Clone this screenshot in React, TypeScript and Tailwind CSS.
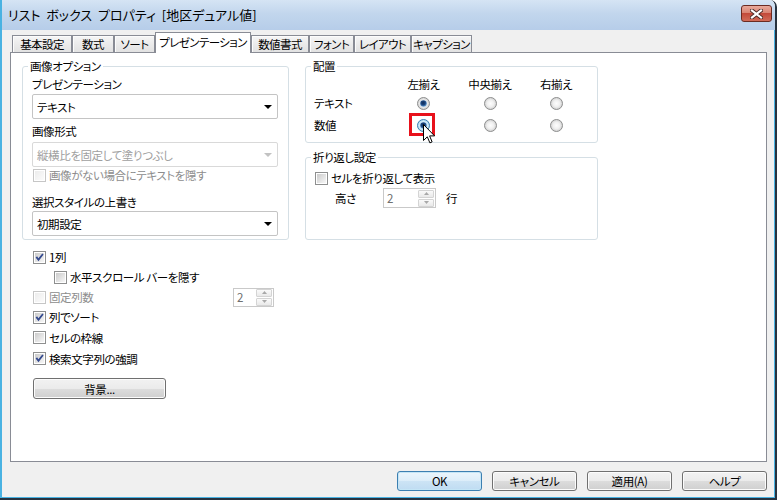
import React from "react";

function CheckBox({ checked = false, disabled = false }: { checked?: boolean; disabled?: boolean }) {
  return (
    <svg width="13" height="13" viewBox="0 0 13 13" className="shrink-0">
      <defs>
        <linearGradient id="cbg" x1="0" y1="0" x2="1" y2="1">
          <stop offset="0" stopColor="#cbcbcb" />
          <stop offset="1" stopColor="#f7f7f7" />
        </linearGradient>
        <linearGradient id="cbgd" x1="0" y1="0" x2="1" y2="1">
          <stop offset="0" stopColor="#ececec" />
          <stop offset="1" stopColor="#fbfbfb" />
        </linearGradient>
      </defs>
      <rect x="0.5" y="0.5" width="12" height="12" fill="#fff" stroke={disabled ? "#c6c6c6" : "#8e8f8f"} />
      <rect x="2" y="2" width="9" height="9" fill={disabled ? "url(#cbgd)" : "url(#cbg)"} />
      {checked && (
        <path d="M2.6 6.4 L4.1 5.2 L5.4 7.2 L9.3 2.4 L10.6 3.4 L5.5 10.2 Z" fill="#33498e" />
      )}
    </svg>
  );
}

function Radio({ checked = false, hover = false }: { checked?: boolean; hover?: boolean }) {
  return (
    <svg width="13" height="13" viewBox="0 0 13 13" className="shrink-0">
      <defs>
        <radialGradient id="rbg" cx="0.5" cy="0.5" r="0.5">
          <stop offset="0" stopColor="#fdfdfd" />
          <stop offset="0.55" stopColor="#f0f0f0" />
          <stop offset="1" stopColor="#cfcfcf" />
        </radialGradient>
        <radialGradient id="rbgh" cx="0.5" cy="0.5" r="0.5">
          <stop offset="0" stopColor="#f2f9fe" />
          <stop offset="0.6" stopColor="#d9effb" />
          <stop offset="1" stopColor="#a9d6f2" />
        </radialGradient>
        <radialGradient id="rdot" cx="0.45" cy="0.4" r="0.6">
          <stop offset="0" stopColor="#102c5a" />
          <stop offset="0.55" stopColor="#1b4680" />
          <stop offset="1" stopColor="#6fa8dc" />
        </radialGradient>
      </defs>
      <circle cx="6.5" cy="6.5" r="6" fill={hover ? "url(#rbgh)" : "url(#rbg)"} stroke={hover ? "#3c7fb1" : "#8e8f8f"} />
      {checked && <circle cx="6.5" cy="6.5" r="3.3" fill="url(#rdot)" />}
    </svg>
  );
}

function Arrow({ color }: { color: string }) {
  return (
    <svg width="8" height="4" viewBox="0 0 8 4" className="shrink-0">
      <polygon points="0,0 8,0 4,4" fill={color} />
    </svg>
  );
}

function Combo({ text, disabled = false, className = "" }: { text: string; disabled?: boolean; className?: string }) {
  return (
    <div
      className={`${className} h-[25px] flex items-center rounded-[2px] border ${
        disabled ? "border-[#d9d9d9] text-[#a0a0a0] bg-white" : "border-[#c4c4c4] bg-white"
      } pl-[4px] pr-[5px]`}
    >
      <span className="flex-1 whitespace-nowrap">{text}</span>
      <Arrow color={disabled ? "#c2c2c2" : "#000"} />
    </div>
  );
}

function CheckRow({
  label,
  checked = false,
  disabled = false,
  className = "",
}: {
  label: string;
  checked?: boolean;
  disabled?: boolean;
  className?: string;
}) {
  return (
    <div className={`${className} flex items-center gap-[3px] ${disabled ? "text-[#8d8d8d]" : ""}`}>
      <CheckBox checked={checked} disabled={disabled} />
      <span className="leading-[16px] whitespace-nowrap">{label}</span>
    </div>
  );
}

function SpinBtn({ up = false }: { up?: boolean }) {
  return (
    <div className="h-[8px] border border-[#d4d4d4] rounded-[1px] bg-[linear-gradient(#fafafa,#e9e9e9)] flex items-center justify-center">
      <svg width="5" height="3" viewBox="0 0 5 3">
        <polygon points={up ? "0,3 5,3 2.5,0" : "0,0 5,0 2.5,3"} fill="#a8a8a8" />
      </svg>
    </div>
  );
}

function Spinner({ className }: { className: string }) {
  return (
    <div className={`${className} border border-[#c9c9c9] bg-white flex items-stretch`}>
      <span className="flex-1 pl-[3px] text-[#707070] flex items-center leading-[16px]">2</span>
      <div className="w-[17px] flex flex-col justify-center gap-[1px] pr-[1px]">
        <SpinBtn up />
        <SpinBtn />
      </div>
    </div>
  );
}

function Button({ children, className = "", primary = false }: { children: React.ReactNode; className?: string; primary?: boolean }) {
  return (
    <div
      className={`${className} flex items-center justify-center rounded-[3px] border whitespace-nowrap ${
        primary
          ? "border-[#3c7fb1] bg-[linear-gradient(#eaf5fc,#dcedf9_50%,#cde4f5_50%,#bfdcf2)] shadow-[inset_0_0_0_1px_#c4e5f6]"
          : "border-[#707070] bg-[linear-gradient(#f2f2f2,#ebebeb_50%,#dddddd_50%,#cfcfcf)] shadow-[inset_0_0_0_1px_#fcfcfc]"
      } leading-[16px]`}
    >
      {children}
    </div>
  );
}

function CloseButton() {
  return (
    <div className="w-[31px] h-[17px] mt-[5px] mr-[3px] self-start rounded-[3px] border border-[#6b2b22] bg-[linear-gradient(#e9a99b,#d98473_45%,#c34a3a_50%,#d16b58)] flex items-center justify-center">
      <svg width="13" height="10" viewBox="0 0 13 10">
        <path d="M2 1.5 L11 8.5 M11 1.5 L2 8.5" stroke="#4a2a26" strokeWidth="4" strokeLinecap="square" />
        <path d="M2 1.5 L11 8.5 M11 1.5 L2 8.5" stroke="#ffffff" strokeWidth="2.2" strokeLinecap="square" />
      </svg>
    </div>
  );
}

const tabs: { label: string; w: string; active?: boolean }[] = [
  { label: "基本設定", w: "w-[60px]" },
  { label: "数式", w: "w-[42px]" },
  { label: "ソート", w: "w-[41px]" },
  { label: "プレゼンテーション", w: "w-[96px]", active: true },
  { label: "数値書式", w: "w-[58px]" },
  { label: "フォント", w: "w-[45px]" },
  { label: "レイアウト", w: "w-[57px]" },
  { label: "キャプション", w: "w-[61px]" },
];

export default function App() {
  return (
    <div className="w-[777px] h-[500px] flex flex-col overflow-hidden rounded-tr-[7px] border-r-2 border-b-2 border-[#27323f] text-[11.5px] tracking-[-0.4px] leading-[16px] text-black [font-family:'Noto_Sans_CJK_JP','Noto_Sans',sans-serif] [font-feature-settings:'palt'_1] select-none">
      {/* Title bar */}
      <div className="h-[30px] shrink-0 flex items-center bg-[linear-gradient(#d5e4f4,#c2d6ed_45%,#b6cde9)] border-l-2 border-[#49b2e2]">
        <span className="pl-[6px] text-[13px] tracking-normal [word-spacing:3px] whitespace-nowrap">
          リスト ボックス プロパティ [地区デュアル値]
        </span>
        <div className="flex-1" />
        <CloseButton />
      </div>

      {/* Body */}
      <div className="flex-1 flex flex-col bg-[#f0f0f0] border-l-2 border-r border-b border-[#49b2e2] pl-[8px] pr-[7px] pt-[2px]">
        {/* Tabs */}
        <div className="relative z-10 h-[20px] flex items-end pl-[2px]">
          {tabs.map((t) =>
            t.active ? (
              <div
                key={t.label}
                className={`${t.w} h-[21px] mb-[-1px] bg-white border border-b-0 border-[#898c95] flex justify-center pt-[1px] whitespace-nowrap tracking-[-0.6px]`}
              >
                {t.label}
              </div>
            ) : (
              <div
                key={t.label}
                className={`${t.w} h-[17px] border border-b-0 border-[#898c95] bg-[linear-gradient(#f6f6f6,#ebebeb_50%,#e2e2e2)] shadow-[inset_1px_1px_0_#fcfcfc] flex items-center justify-center whitespace-nowrap tracking-[-0.6px]`}
              >
                {t.label}
              </div>
            )
          )}
        </div>

        {/* Panel */}
        <div className="h-[410px] bg-white border border-[#898c95] flex flex-col pt-[6px] pl-[11px]">
          <div className="flex gap-[16px]">
            {/* Left group */}
            <fieldset className="w-[267px] h-[181px] border border-[#d5dfe5] rounded-[3px]">
              <legend className="ml-[5px] px-[2px] leading-[14px]">画像オプション</legend>
              <div className="pl-[9px] pr-[10px] flex flex-col">
                <div className="mt-[3px]">プレゼンテーション</div>
                <Combo className="mt-[2px]" text="テキスト" />
                <div className="mt-[4px]">画像形式</div>
                <Combo className="mt-[3px]" text="縦横比を固定して塗りつぶし" disabled />
                <CheckRow className="h-[16px] pl-[1px]" disabled label="画像がない場合にテキストを隠す" />
                <div className="mt-[11px]">選択スタイルの上書き</div>
                <Combo className="mt-[1px]" text="初期設定" />
              </div>
            </fieldset>

            {/* Right column */}
            <div className="w-[293px] flex flex-col">
              <fieldset className="h-[84px] border border-[#d5dfe5] rounded-[3px]">
                <legend className="ml-[5px] px-[2px] leading-[14px]">配置</legend>
                <div className="grid grid-cols-[84px_67px_66px_66px] mt-[3px]">
                  <div className="h-[16px]" />
                  <div className="text-center">左揃え</div>
                  <div className="text-center">中央揃え</div>
                  <div className="text-center">右揃え</div>

                  <div className="h-[22px] flex items-center pl-[8px]">テキスト</div>
                  <div className="flex items-center justify-center">
                    <Radio checked />
                  </div>
                  <div className="flex items-center justify-center">
                    <Radio />
                  </div>
                  <div className="flex items-center justify-center">
                    <Radio />
                  </div>

                  <div className="h-[22px] flex items-center pl-[8px]">数値</div>
                  <div className="flex items-center justify-center">
                    <div className="relative w-[13px] h-[13px]">
                      <Radio checked hover />
                      <div className="absolute left-[-8px] top-[-6px] w-[26px] h-[23px] border-[3px] border-[#e8111b]" />
                      <svg width="12" height="20" viewBox="0 0 12 20" className="absolute left-[6px] top-[5px]">
                        <path
                          d="M0.5 0.5 V16.5 L4.3 12.8 L6.9 18.9 L9.1 17.9 L6.6 11.9 H11.6 Z"
                          fill="#ffffff"
                          stroke="#000000"
                          strokeWidth="1"
                        />
                      </svg>
                    </div>
                  </div>
                  <div className="flex items-center justify-center">
                    <Radio />
                  </div>
                  <div className="flex items-center justify-center">
                    <Radio />
                  </div>
                </div>
              </fieldset>

              <fieldset className="mt-[7px] h-[90px] border border-[#d5dfe5] rounded-[3px]">
                <legend className="ml-[5px] px-[2px] leading-[14px]">折り返し設定</legend>
                <div className="flex flex-col">
                  <CheckRow className="mt-[6px] h-[16px] pl-[9px]" label="セルを折り返して表示" />
                  <div className="flex items-center h-[20px] mt-[2px] pl-[29px]">
                    <span className="w-[48px]">高さ</span>
                    <Spinner className="w-[53px] h-[20px]" />
                    <span className="ml-[10px]">行</span>
                  </div>
                </div>
              </fieldset>
            </div>
          </div>

          {/* Lower options */}
          <div className="flex flex-col pl-[11px] mt-[7px]">
            <CheckRow className="h-[20px]" checked label="1列" />
            <CheckRow className="h-[20px] pl-[21px]" label="水平スクロール バーを隠す" />
            <div className="h-[20px] w-[241px] flex items-center justify-between">
              <CheckRow disabled label="固定列数" />
              <Spinner className="w-[41px] h-[19px]" />
            </div>
            <CheckRow className="h-[20px]" checked label="列でソート" />
            <CheckRow className="h-[21px]" label="セルの枠線" />
            <CheckRow className="h-[21px]" checked label="検索文字列の強調" />
            <Button className="mt-[9px] w-[133px] h-[21px]">背景...</Button>
          </div>
        </div>

        {/* Dialog buttons */}
        <div className="flex justify-end gap-[10px] mt-[9px]">
          <Button primary className="w-[85px] h-[20px]">
            OK
          </Button>
          <Button className="w-[85px] h-[20px]">キャンセル</Button>
          <Button className="w-[85px] h-[20px]">適用(A)</Button>
          <Button className="w-[85px] h-[20px]">ヘルプ</Button>
        </div>
      </div>
    </div>
  );
}
